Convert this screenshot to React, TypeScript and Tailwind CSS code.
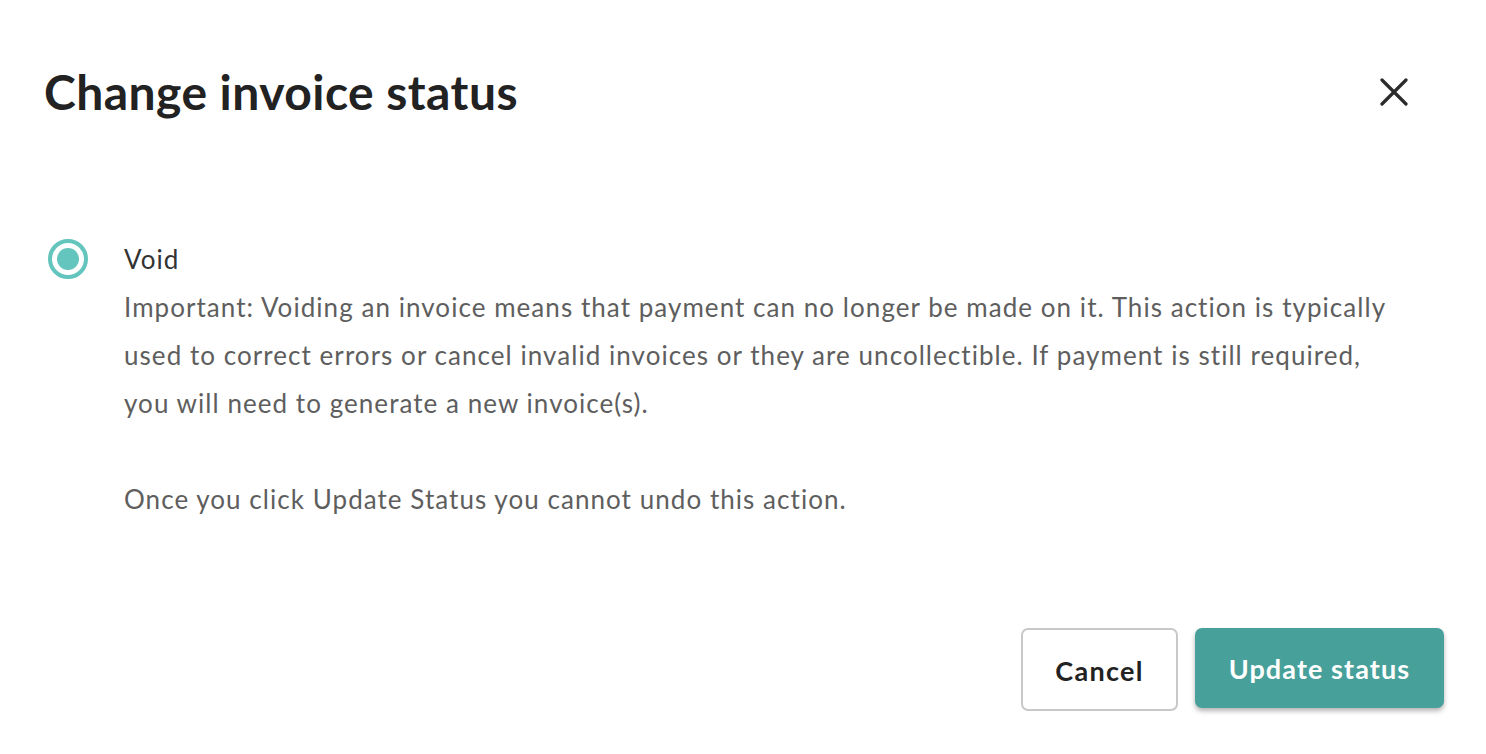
export default function App() {
  return (
    <div className="min-h-screen w-full bg-white font-['Lato',sans-serif]">
      <div className="flex flex-col px-[44px] pt-[62px]">
        {/* Header */}
        <div className="flex items-center justify-between">
          <h1 className="text-[48px] font-bold leading-[60px] tracking-[0.45px] text-[#222222]">
            Change invoice status
          </h1>
          <button className="mr-[28px] flex h-[40px] w-[40px] items-center justify-center text-[#2b2b2b]">
            <svg width="28" height="28" viewBox="0 0 28 28" fill="none">
              <path
                d="M2 2L26 26M26 2L2 26"
                stroke="currentColor"
                strokeWidth="3.2"
                strokeLinecap="round"
              />
            </svg>
          </button>
        </div>

        {/* Option */}
        <div className="mt-[113px] flex items-start gap-[36px] pl-[4px]">
          <div className="mt-[4px] flex h-[40px] w-[40px] shrink-0 items-center justify-center rounded-full border-[4px] border-[#64c5be]">
            <div className="h-[22px] w-[22px] rounded-full bg-[#64c5be]" />
          </div>
          <div className="flex flex-col text-[26px] leading-[48px] tracking-[1.05px]">
            <span className="text-[#333333]">Void</span>
            <p className="max-w-[1275px] text-[#5e5e5e]">
              Important: Voiding an invoice means that payment can no longer be made on it. This action is typically
              used to correct errors or cancel invalid invoices or they are uncollectible. If payment is still required,
              you will need to generate a new invoice(s).
            </p>
            <p className="mt-[48px] text-[#5e5e5e]">
              Once you click Update Status you cannot undo this action.
            </p>
          </div>
        </div>

        {/* Actions */}
        <div className="mt-[105px] flex items-start justify-end gap-[17px]">
          <button className="h-[83px] w-[157px] rounded-[7px] border-2 border-[#c8c8c8] bg-white pt-[3px] text-[27px] font-bold tracking-[1.3px] text-[#222222]">
            Cancel
          </button>
          <button className="mr-[-2px] h-[80px] w-[249px] rounded-[7px] bg-[#47a09a] pt-[2px] text-[27px] font-bold tracking-[1.1px] text-white shadow-[0_3px_5px_rgba(0,0,0,0.3)]">
            Update status
          </button>
        </div>
      </div>
    </div>
  )
}
